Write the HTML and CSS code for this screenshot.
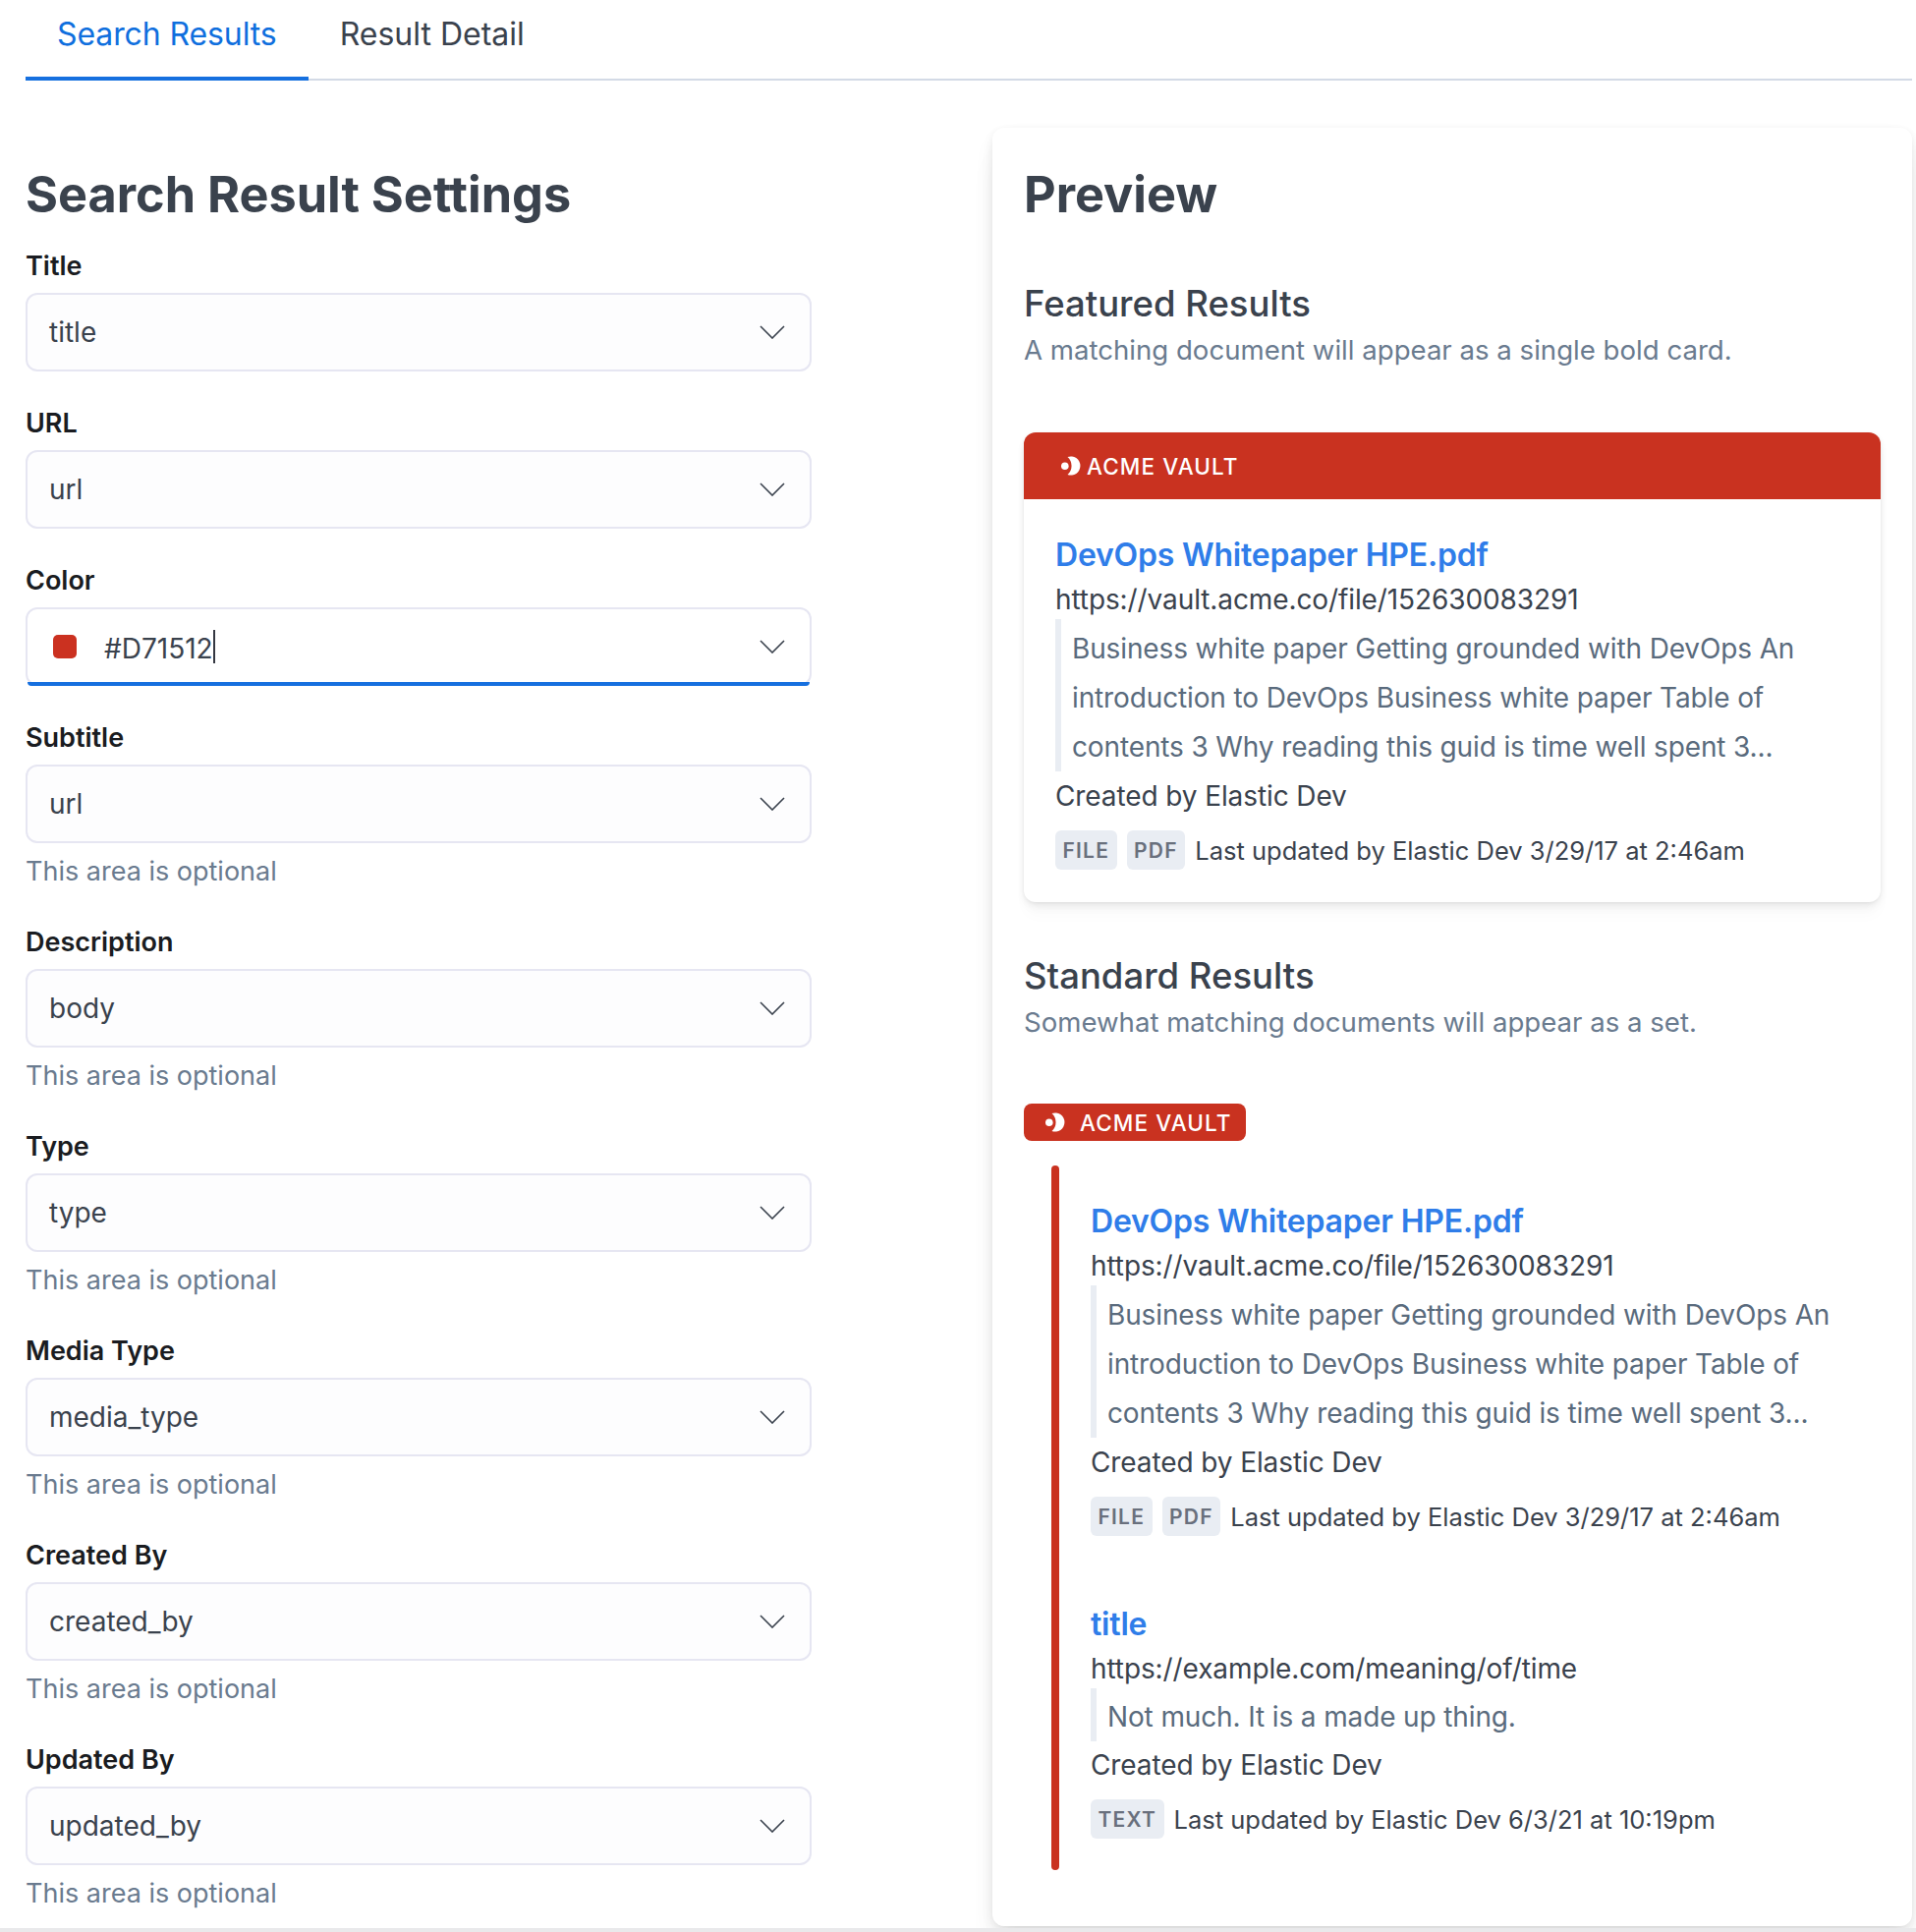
FILE: index.html
```html
<!DOCTYPE html>
<html lang="en">
<head>
<meta charset="utf-8">
<title>Search Results</title>
<link rel="stylesheet" href="styles.css">
</head>
<body>
<svg class="defs" width="0" height="0" aria-hidden="true">
  <symbol id="logo" viewBox="0 0 20 20">
    <path d="M6.500 1A9.600 9.600 0 1 1 6.500 19A12 12 0 0 0 6.500 1z" fill="#fff"/>
    <circle cx="3.800" cy="10.300" r="3.800" fill="#fff"/>
  </symbol>
  <symbol id="chev" viewBox="0 0 26 14">
    <path d="M1 1L13 13L25 1" fill="none" stroke="#3A424D" stroke-width="1.600"/>
  </symbol>
</svg>
<nav class="tabs">
  <a class="tab tab-active">Search Results</a>
  <a class="tab">Result Detail</a>
</nav>
<main class="page">
  <section class="settings">
    <h2 class="heading">Search Result Settings</h2>
    <div class="row"><label class="label">Title</label><div class="select"><span>title</span><svg class="chev"><use href="#chev"/></svg></div></div>
    <div class="row"><label class="label">URL</label><div class="select"><span>url</span><svg class="chev"><use href="#chev"/></svg></div></div>
    <div class="row"><label class="label">Color</label><div class="select select-focus"><i class="swatch"></i><span class="color-value">#D71512</span><i class="caret"></i><svg class="chev"><use href="#chev"/></svg></div></div>
    <div class="row"><label class="label">Subtitle</label><div class="select"><span>url</span><svg class="chev"><use href="#chev"/></svg></div><div class="help">This area is optional</div></div>
    <div class="row"><label class="label">Description</label><div class="select"><span>body</span><svg class="chev"><use href="#chev"/></svg></div><div class="help">This area is optional</div></div>
    <div class="row"><label class="label">Type</label><div class="select"><span>type</span><svg class="chev"><use href="#chev"/></svg></div><div class="help">This area is optional</div></div>
    <div class="row"><label class="label">Media Type</label><div class="select"><span>media_type</span><svg class="chev"><use href="#chev"/></svg></div><div class="help">This area is optional</div></div>
    <div class="row"><label class="label">Created By</label><div class="select"><span>created_by</span><svg class="chev"><use href="#chev"/></svg></div><div class="help">This area is optional</div></div>
    <div class="row"><label class="label">Updated By</label><div class="select"><span>updated_by</span><svg class="chev"><use href="#chev"/></svg></div><div class="help">This area is optional</div></div>
  </section>
  <section class="preview">
    <h2 class="heading">Preview</h2>
    <h3 class="subheading">Featured Results</h3>
    <p class="subtext">A matching document will appear as a single bold card.</p>
    <article class="card">
      <header class="card-head"><svg class="logo"><use href="#logo"/></svg><span>ACME VAULT</span></header>
      <div class="card-body">
        <div class="result">
          <a class="r-title">DevOps Whitepaper HPE.pdf</a>
          <div class="r-line">https://vault.acme.co/file/152630083291</div>
          <blockquote class="r-quote">Business white paper Getting grounded with DevOps An introduction to DevOps Business white paper Table of contents 3 Why reading this guid is time well spent 3...</blockquote>
          <div class="r-line">Created by Elastic Dev</div>
          <div class="r-meta"><span class="tag">FILE</span><span class="tag">PDF</span><span>Last updated by Elastic Dev 3/29/17 at 2:46am</span></div>
        </div>
      </div>
    </article>
    <h3 class="subheading">Standard Results</h3>
    <p class="subtext">Somewhat matching documents will appear as a set.</p>
    <div class="badge"><svg class="logo"><use href="#logo"/></svg><span>ACME VAULT</span></div>
    <div class="group">
      <div class="bar"></div>
      <div class="group-items">
        <div class="result">
          <a class="r-title">DevOps Whitepaper HPE.pdf</a>
          <div class="r-line">https://vault.acme.co/file/152630083291</div>
          <blockquote class="r-quote">Business white paper Getting grounded with DevOps An introduction to DevOps Business white paper Table of contents 3 Why reading this guid is time well spent 3...</blockquote>
          <div class="r-line">Created by Elastic Dev</div>
          <div class="r-meta"><span class="tag">FILE</span><span class="tag">PDF</span><span>Last updated by Elastic Dev 3/29/17 at 2:46am</span></div>
        </div>
        <div class="result">
          <a class="r-title">title</a>
          <div class="r-line">https://example.com/meaning/of/time</div>
          <blockquote class="r-quote r-quote-short">Not much. It is a made up thing.</blockquote>
          <div class="r-line">Created by Elastic Dev</div>
          <div class="r-meta"><span class="tag">TEXT</span><span>Last updated by Elastic Dev 6/3/21 at 10:19pm</span></div>
        </div>
      </div>
    </div>
  </section>
</main>
<div class="page-end"></div>
</body>
</html>
```
FILE: styles.css
```css
* { box-sizing: border-box; }
html, body { margin: 0; padding: 0; background: #fff; }
body {
  display: flex;
  flex-direction: column;
  width: 1950px;
  height: 1966px;
  overflow: hidden;
  font-family: Inter, "Liberation Sans", sans-serif;
  font-size: 28px;
  color: #3A424D;
  background: #fff;
}
.defs { position: absolute; }
.tabs {
  display: flex;
  flex: none;
  height: 82px;
  margin: 0 4px 0 26px;
  border-bottom: 2px solid #D3DAE6;
}
.tab {
  height: 82px;
  padding: 0 32px;
  font-size: 32px;
  line-height: 70px;
  color: #3A424D;
}
.tab-active {
  color: #0F6FDE;
  letter-spacing: -.1px;
  border-bottom: 4px solid #1670DF;
}
.page {
  display: flex;
  flex: 1;
  align-items: flex-start;
  min-height: 0;
  padding: 48px 4px 0 26px;
}
.settings { width: 984px; padding-top: 32px; flex: none; }
.heading {
  margin: 0;
  font-size: 50.400px;
  line-height: 72px;
  font-weight: 700;
  color: #3A424D;
}
.row { margin-top: 16px; }
.row + .row { margin-top: 32px; }
.label {
  display: block;
  height: 40px;
  line-height: 42px;
  margin-bottom: 8px;
  font-size: 27px;
  font-weight: 600;
  color: #1A1C21;
}
.select {
  display: flex;
  align-items: center;
  width: 800px;
  height: 80px;
  padding: 0 25px 0 22px;
  background: #FDFDFE;
  border: 2px solid #E6E6F2;
  border-radius: 12px;
}
.select .chev { margin-left: auto; }
.chev { width: 26px; height: 14px; flex: none; }
.select-focus {
  position: relative;
  background: #fff;
}
.select-focus::after {
  content: "";
  position: absolute;
  left: 0;
  right: 0;
  bottom: -2px;
  height: 4px;
  background: #1670DF;
  border-radius: 0 0 12px 12px;
}
.swatch {
  width: 24px;
  height: 24px;
  margin-left: 4px;
  border-radius: 5px;
  background: #CB3120;
}
.color-value { margin-left: 28px; padding-top: 3px; }
.caret { width: 2px; height: 34px; background: #343741; }
.help { height: 48px; padding-top: 8px; line-height: 42px; font-size: 27px; color: #6A7B8F; }
.preview {
  flex: none;
  width: 936px;
  height: 1830px;
  padding: 32px;
  background: #fff;
  border-radius: 12px;
  box-shadow: 0 2px 8px -2px rgba(0,0,0,.08), 0 5px 16px -2px rgba(0,0,0,.06), 0 11px 24px -2px rgba(0,0,0,.05), 0 30px 30px -2px rgba(0,0,0,.04);
}
.subheading {
  margin: 51px 0 0;
  font-size: 36.500px;
  line-height: 48px;
  font-weight: 500;
  color: #3A424D;
}
.subtext { margin: 0; line-height: 46px; font-size: 27.600px; color: #6A7B8F; }
.card {
  margin-top: 61px;
  width: 872px;
  background: #fff;
  border-radius: 12px;
  box-shadow: 0 1px 4px -1px rgba(0,0,0,.08), 0 3px 8px -1px rgba(0,0,0,.06), 0 6px 12px -1px rgba(0,0,0,.04), 0 15px 15px -1px rgba(0,0,0,.02);
}
.card-head {
  display: flex;
  align-items: center;
  height: 68px;
  padding-left: 38px;
  background: #C93220;
  border-radius: 12px 12px 0 0;
  color: #fff;
  font-size: 22.500px;
  font-weight: 500;
  letter-spacing: 1.100px;
}
.logo { width: 20px; height: 20px; flex: none; margin-right: 6px; }
.card-body { padding: 32px 32px 33px; }
.r-title {
  display: block;
  font-size: 32px;
  line-height: 50px;
  font-weight: 600;
  letter-spacing: -.2px;
  color: #2F7DE9;
}
.r-line { line-height: 40px; letter-spacing: -.1px; }
.r-quote {
  margin: 0 0 5px;
  padding: 5px 0 0 11px;
  border-left: 6px solid #E9EDF3;
  line-height: 50px;
  letter-spacing: -.13px;
  color: #5A6B7D;
}
.r-quote-short { margin-bottom: 4px; padding-top: 4px; }
.r-meta {
  display: flex;
  align-items: center;
  gap: 10px;
  margin-top: 15px;
  height: 40px;
  font-size: 25.500px;
}
.tag {
  height: 40px;
  padding: 0 7.500px;
  line-height: 41px;
  font-size: 21px;
  font-weight: 600;
  letter-spacing: 1.200px;
  color: #69707D;
  background: #E9EDF3;
  border-radius: 6px;
}
.badge {
  display: flex;
  align-items: center;
  width: 226px;
  height: 38px;
  margin-top: 60px;
  padding-left: 22px;
  background: #C93220;
  border-radius: 8px;
  color: #fff;
  font-size: 22.500px;
  font-weight: 500;
  letter-spacing: 1.100px;
}
.badge .logo { margin-right: 15px; }
.group { display: flex; margin: 25px 0 0 28px; }
.bar { width: 8px; flex: none; background: #C93220; border-radius: 4px; }
.group-items { padding: 32px 0 32px 32px; }
.group-items .result + .result { margin-top: 65px; }
.page-end { flex: none; height: 4px; background: #E9E9EB; }
```
